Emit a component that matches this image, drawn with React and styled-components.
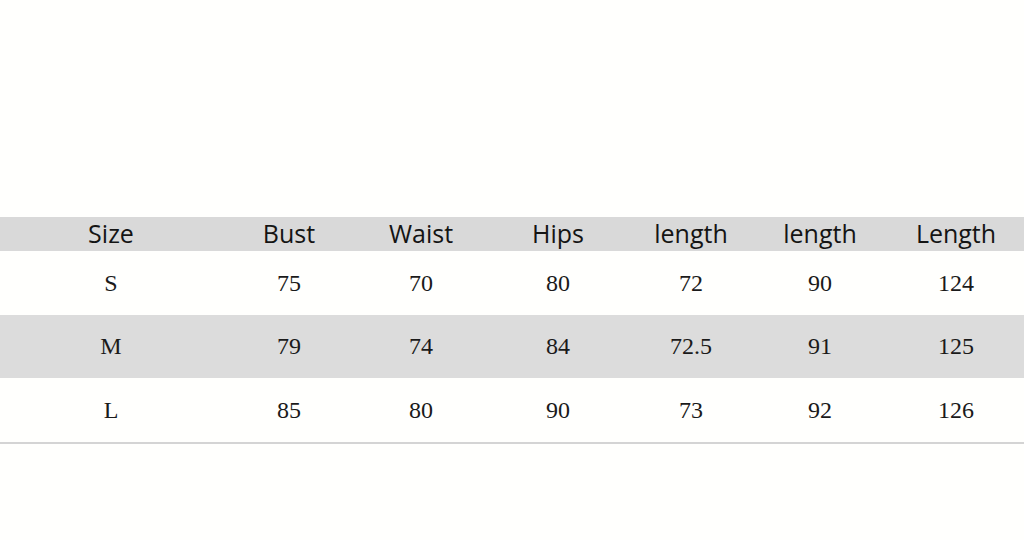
import React from "react";
import styled, { createGlobalStyle } from "styled-components";

const GlobalStyle = createGlobalStyle`
  html, body {
    margin: 0;
    padding: 0;
    background: #fffffd;
  }
`;

const Page = styled.main`
  width: 1024px;
  height: 540px;
  padding-top: 217px;
  box-sizing: border-box;
  background: #fffffd;
`;

const Table = styled.div`
  display: grid;
  grid-template-columns: 222px 134px 130px 144px 122px 136px 136px;
  border-bottom: 2px solid #d4d4d4;
`;

const Row = styled.div`
  display: contents;
`;

const HeadCell = styled.div`
  height: 34px;
  padding-bottom: 2px;
  box-sizing: border-box;
  background: #d9d9d9;
  display: flex;
  align-items: center;
  justify-content: center;
  font-family: "Open Sans", "Noto Sans", sans-serif;
  font-size: 25px;
  color: #141414;
  line-height: 1;
`;

const Cell = styled.div`
  height: ${(p) => p.$h}px;
  background: ${(p) => (p.$shade ? "#dcdcdc" : "transparent")};
  display: flex;
  align-items: center;
  justify-content: center;
  font-family: "Liberation Serif", "Times New Roman", serif;
  font-size: 24px;
  color: #1a1a1a;
`;

const headers = ["Size", "Bust", "Waist", "Hips", "length", "length", "Length"];
const rows = [
  ["S", "75", "70", "80", "72", "90", "124"],
  ["M", "79", "74", "84", "72.5", "91", "125"],
  ["L", "85", "80", "90", "73", "92", "126"],
];

export default function App() {
  return (
    <>
      <GlobalStyle />
      <Page>
        <Table>
          <Row>
            {headers.map((h, i) => (
              <HeadCell key={i}>{h}</HeadCell>
            ))}
          </Row>
          {rows.map((r, ri) => (
            <Row key={ri}>
              {r.map((v, ci) => (
                <Cell key={ci} $shade={ri === 1} $h={ri === 1 ? 63 : 64}>
                  {v}
                </Cell>
              ))}
            </Row>
          ))}
        </Table>
      </Page>
    </>
  );
}
